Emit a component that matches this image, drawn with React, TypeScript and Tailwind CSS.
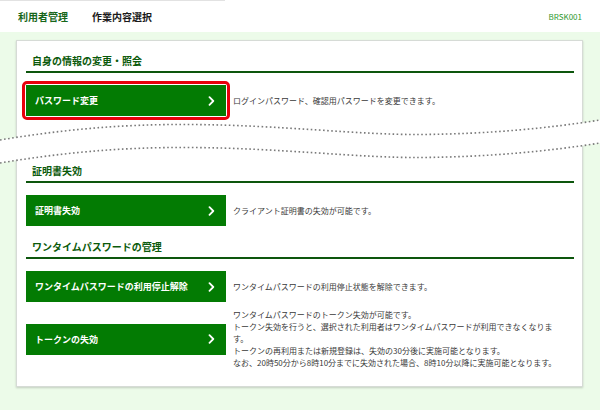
import React from "react";

const font = { fontFamily: '"Noto Sans CJK JP", "Noto Sans", sans-serif' };

function Chevron() {
  return (
    <svg width="7" height="10" viewBox="0 0 7 10" className="shrink-0">
      <polyline points="1.5,1.2 5.3,5 1.5,8.8" fill="none" stroke="#ffffff" strokeWidth="1.8" strokeLinecap="round" strokeLinejoin="round" />
    </svg>
  );
}

function SectionTitle({ children, className = "" }: { children: React.ReactNode; className?: string }) {
  return (
    <div className={`border-b-2 border-[#0d560d] pb-[3px] pl-[6px] text-[10px] leading-[14px] font-bold text-[#0b5a0b] ${className}`}>
      {children}
    </div>
  );
}

function GreenButton({ label, highlight = false }: { label: string; highlight?: boolean }) {
  return (
    <div className="relative shrink-0">
      {highlight && (
        <div className="pointer-events-none absolute -inset-[4px] rounded-[5px] border-[3px] border-[#e8000c]" />
      )}
      <div className="flex h-[31px] w-[200px] items-center justify-between bg-[#037b03] pl-[9px] pr-[11px] text-[9px] font-bold leading-none text-white">
        <span>{label}</span>
        <Chevron />
      </div>
    </div>
  );
}

function Row({ label, desc, highlight = false, className = "" }: { label: string; desc: React.ReactNode; highlight?: boolean; className?: string }) {
  return (
    <div className={`flex items-center gap-[7px] ${className}`}>
      <GreenButton label={label} highlight={highlight} />
      <div className="text-[8px] leading-[12px] text-[#3a3a3a]">{desc}</div>
    </div>
  );
}

function WaveBreak() {
  const top = "M0,24 C60,14 120,8 190,8.5 C280,9 360,19 420,18.5 C490,18 550,12 600,4";
  const bottom = "M0,47 C60,37 120,31 190,31.5 C280,32 360,42 420,41.5 C490,41 550,35 600,27";
  const fill =
    "M0,24 C60,14 120,8 190,8.5 C280,9 360,19 420,18.5 C490,18 550,12 600,4 L600,27 C550,35 490,41 420,41.5 C360,42 280,32 190,31.5 C120,31 60,37 0,47 Z";
  return (
    <div className="-ml-[26px] -mr-[26px] h-[48px] w-[600px]">
      <svg width="600" height="48" viewBox="0 0 600 48" className="block">
        <path d={fill} fill="#ffffff" />
        <path d={top} fill="none" stroke="#7a7a7a" strokeWidth="1.6" strokeDasharray="1.6 2.5" />
        <path d={bottom} fill="none" stroke="#7a7a7a" strokeWidth="1.6" strokeDasharray="1.6 2.5" />
      </svg>
    </div>
  );
}

export default function App() {
  return (
    <div className="h-[410px] w-[600px] overflow-hidden bg-[#ecfbe9]" style={font}>
      {/* header */}
      <div className="bg-white">
        <div className="h-px w-[225px] bg-[#e2e2e2]" />
        <div className="flex h-[31px] items-center pl-[18px] pr-[18px]">
          <span className="text-[10px] font-bold text-[#17661a]">利用者管理</span>
          <span className="ml-[24px] text-[10px] font-bold text-[#1a1a1a]">作業内容選択</span>
          <span className="ml-auto text-[8px] text-[#2f9a2f]">BRSK001</span>
        </div>
      </div>

      {/* main */}
      <div className="pl-[16px] pr-[17px] pt-[8px]">
        <div className="border border-[#d6dbd6] bg-white pb-[17px] pl-[9px] pr-[8px] pt-[13px] shadow-[0_1px_2px_rgba(0,0,0,0.18)]">
          <SectionTitle>自身の情報の変更・照会</SectionTitle>
          <Row
            className="mt-[12px]"
            label="パスワード変更"
            highlight
            desc="ログインパスワード、確認用パスワードを変更できます。"
          />

          <WaveBreak />

          <SectionTitle>証明書失効</SectionTitle>
          <Row className="mt-[12px]" label="証明書失効" desc="クライアント証明書の失効が可能です。" />

          <SectionTitle className="mt-[14px]">ワンタイムパスワードの管理</SectionTitle>
          <Row
            className="mt-[12px]"
            label="ワンタイムパスワードの利用停止解除"
            desc="ワンタイムパスワードの利用停止状態を解除できます。"
          />
          <Row
            className="mt-[7px]"
            label="トークンの失効"
            desc={
              <>
                <div className="whitespace-nowrap">ワンタイムパスワードのトークン失効が可能です。</div>
                <div className="whitespace-nowrap">トークン失効を行うと、選択された利用者はワンタイムパスワードが利用できなくなりま</div>
                <div className="whitespace-nowrap">す。</div>
                <div className="whitespace-nowrap">トークンの再利用または新規登録は、失効の30分後に実施可能となります。</div>
                <div className="whitespace-nowrap">なお、20時50分から8時10分までに失効された場合、8時10分以降に実施可能となります。</div>
              </>
            }
          />
        </div>
      </div>
    </div>
  );
}
